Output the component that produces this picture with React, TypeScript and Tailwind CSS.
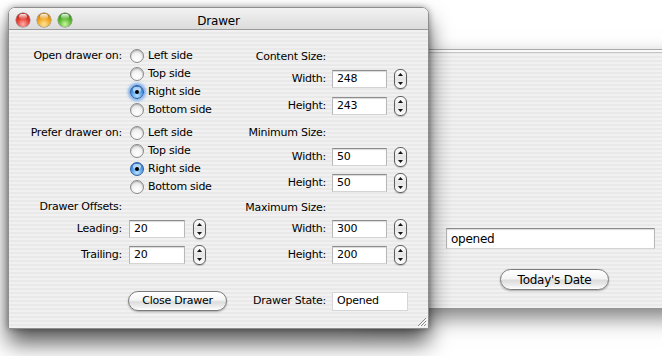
import React from "react";

const stripes =
  "bg-[repeating-linear-gradient(180deg,#f1f1f1_0px,#f1f1f1_2px,#e9e9e9_2px,#e9e9e9_4px)]";

function Radio({ checked, focus, label }: { checked?: boolean; focus?: boolean; label: string }) {
  return (
    <div className="flex h-[18px] items-center">
      {checked ? (
        <div
          className={
            "relative flex h-[14px] w-[14px] items-center justify-center rounded-full border border-[#2f5f9e] bg-[radial-gradient(circle_at_50%_80%,#b9e2ff_0%,#4a97e6_55%,#2a6cc0_100%)] " +
            (focus ? "shadow-[0_0_3px_2px_rgba(80,150,240,0.75)]" : "")
          }
        >
          <div className="absolute left-[2px] top-[1px] h-[5px] w-[8px] rounded-full bg-white/60" />
          <div className="relative h-[4px] w-[4px] rounded-full bg-black" />
        </div>
      ) : (
        <div className="relative h-[14px] w-[14px] rounded-full border border-[#8a8a8a] bg-[radial-gradient(circle_at_50%_75%,#ffffff_0%,#f4f4f4_45%,#cfcfcf_100%)] shadow-[inset_0_1px_1px_rgba(0,0,0,0.2)]" />
      )}
      <span className="ml-[4px]">{label}</span>
    </div>
  );
}

function Stepper() {
  return (
    <div className="flex h-[20px] w-[13px] flex-col items-center justify-between rounded-[6px] border border-[#5f5f5f] bg-[linear-gradient(180deg,#ffffff,#e4e4e4_50%,#ffffff)] py-[3px] shadow-[0_1px_1px_rgba(0,0,0,0.2)]">
      <svg width="5" height="3" viewBox="0 0 5 3">
        <path d="M2.5 0 L5 3 L0 3 Z" fill="#111" />
      </svg>
      <svg width="5" height="3" viewBox="0 0 5 3">
        <path d="M0 0 L5 0 L2.5 3 Z" fill="#111" />
      </svg>
    </div>
  );
}

function Field({ value, w }: { value: string; w: string }) {
  return (
    <div
      className={
        "flex h-[18px] items-center border border-t-[#8c8c8c] border-x-[#b8b8b8] border-b-[#d4d4d4] bg-white pl-[4px] shadow-[inset_0_1px_1px_rgba(0,0,0,0.15)] " +
        w
      }
    >
      {value}
    </div>
  );
}

function Light({ grad }: { grad: string }) {
  return (
    <div className={"relative h-[14px] w-[14px] rounded-full shadow-[0_0_0_0.5px_rgba(0,0,0,0.5)] " + grad}>
      <div className="absolute left-[3px] top-[1px] h-[5px] w-[8px] rounded-full bg-[linear-gradient(180deg,rgba(255,255,255,0.9),rgba(255,255,255,0.1))]" />
    </div>
  );
}

function AquaButton({ label, w }: { label: string; w: string }) {
  return (
    <div
      className={
        "flex h-[20px] shrink-0 items-center justify-center rounded-full border border-[#7a7a7a] bg-[linear-gradient(180deg,#ffffff_0%,#f4f4f4_45%,#dcdcdc_55%,#ececec_80%,#ffffff_100%)] shadow-[0_1px_2px_rgba(0,0,0,0.3)] " +
        w
      }
    >
      {label}
    </div>
  );
}

function RightRow({ label, value }: { label: string; value: string }) {
  return (
    <div className="flex h-[20px] items-center">
      <div className="w-[100px] shrink-0 text-right">{label}</div>
      <div className="ml-[6px]">
        <Field value={value} w="w-[55px]" />
      </div>
      <div className="ml-[7px]">
        <Stepper />
      </div>
    </div>
  );
}

function LeftFieldRow({ label, value }: { label: string; value: string }) {
  return (
    <div className="flex h-[20px] items-center">
      <div className="w-[113px] shrink-0 text-right">{label}</div>
      <div className="ml-[7px]">
        <Field value={value} w="w-[56px]" />
      </div>
      <div className="ml-[8px]">
        <Stepper />
      </div>
    </div>
  );
}

export default function App() {
  return (
    <div
      className="relative h-[356px] w-[662px] overflow-hidden bg-white text-[11px] tracking-[-0.25px] text-black"
      style={{ fontFamily: '"DejaVu Sans", "Liberation Sans", sans-serif' }}
    >
      {/* back window */}
      <div
        className={
          "absolute left-[360px] top-[49px] flex h-[259px] w-[340px] flex-col border-t border-[#a9a9a9] shadow-[0_10px_20px_rgba(0,0,0,0.5)] " +
          stripes
        }
      >
        <div className="h-[3px] border-b border-[#c4c4c4] bg-[#fafafa]" />
        <div className="ml-[86px] mt-[175px]">
          <div className="flex h-[21px] w-[209px] items-center border border-t-[#8c8c8c] border-x-[#b8b8b8] border-b-[#d4d4d4] bg-white pl-[4px] text-[12px] shadow-[inset_0_1px_1px_rgba(0,0,0,0.15)]">
            opened
          </div>
        </div>
        <div className="ml-[140px] mt-[20px]">
          <AquaButton label="Today's Date" w="w-[109px] h-[21px] text-[12px]" />
        </div>
      </div>

      {/* main window */}
      <div className="absolute left-[8px] top-[7px] flex h-[322px] w-[421px] flex-col overflow-hidden rounded-t-[7px] border border-[#8e8e8e] shadow-[0_14px_22px_rgba(0,0,0,0.65),0_0_6px_rgba(0,0,0,0.35)]">
        {/* title bar */}
        <div className="relative flex h-[22px] shrink-0 items-center border-b border-[#9a9a9a] bg-[linear-gradient(180deg,#f2f2f2,#dcdcdc)] px-[7px] pt-[2px]">
          <div className="flex gap-[7px]">
            <Light grad="bg-[radial-gradient(circle_at_50%_80%,#ffb0a8_0%,#e0372c_50%,#9e1c14_100%)]" />
            <Light grad="bg-[radial-gradient(circle_at_50%_80%,#ffe59a_0%,#f0a21c_50%,#a86410_100%)]" />
            <Light grad="bg-[radial-gradient(circle_at_50%_80%,#c8f7a0_0%,#52b22a_50%,#2c7214_100%)]" />
          </div>
          <div className="absolute inset-x-0 top-[4px] text-center text-[12px] tracking-[-0.2px]">Drawer</div>
        </div>

        {/* content */}
        <div className={"relative flex flex-1 " + stripes}>
          {/* left column */}
          <div className="flex w-[217px] shrink-0 flex-col pt-[17px]">
            <div className="flex">
              <div className="h-[18px] w-[113px] shrink-0 text-right leading-[18px]">Open drawer on:</div>
              <div className="ml-[8px] flex flex-col">
                <Radio label="Left side" />
                <Radio label="Top side" />
                <Radio label="Right side" checked focus />
                <Radio label="Bottom side" />
              </div>
            </div>
            <div className="mt-[5px] flex">
              <div className="h-[18px] w-[113px] shrink-0 text-right leading-[18px]">Prefer drawer on:</div>
              <div className="ml-[8px] flex flex-col">
                <Radio label="Left side" />
                <Radio label="Top side" />
                <Radio label="Right side" checked />
                <Radio label="Bottom side" />
              </div>
            </div>
            <div className="mt-[2px] h-[18px] w-[113px] text-right leading-[18px]">Drawer Offsets:</div>
            <div className="mt-[3px]">
              <LeftFieldRow label="Leading:" value="20" />
            </div>
            <div className="mt-[6px]">
              <LeftFieldRow label="Trailing:" value="20" />
            </div>
            <div className="mt-[26px] flex h-[20px] items-center">
              <div className="w-[119px] shrink-0" />
              <AquaButton label="Close Drawer" w="w-[99px]" />
            </div>
          </div>

          {/* right column */}
          <div className="flex flex-col pt-[18px]">
            <div className="h-[18px] w-[100px] text-right leading-[18px]">Content Size:</div>
            <div className="mt-[3px]">
              <RightRow label="Width:" value="248" />
            </div>
            <div className="mt-[7px]">
              <RightRow label="Height:" value="243" />
            </div>
            <div className="mt-[8px] h-[18px] w-[100px] text-right leading-[18px]">Minimum Size:</div>
            <div className="mt-[5px]">
              <RightRow label="Width:" value="50" />
            </div>
            <div className="mt-[6px]">
              <RightRow label="Height:" value="50" />
            </div>
            <div className="mt-[6px] h-[18px] w-[100px] text-right leading-[18px]">Maximum Size:</div>
            <div className="mt-[2px]">
              <RightRow label="Width:" value="300" />
            </div>
            <div className="mt-[6px]">
              <RightRow label="Height:" value="200" />
            </div>
            <div className="mt-[26px] flex h-[20px] items-center">
              <div className="w-[100px] shrink-0 text-right">Drawer State:</div>
              <div className="ml-[6px] flex h-[19px] w-[76px] items-center border border-[#d6d6d6] bg-white pl-[4px]">
                Opened
              </div>
            </div>
          </div>

          {/* resize grip */}
          <svg className="absolute bottom-[1px] right-[1px]" width="11" height="11" viewBox="0 0 11 11">
            <path d="M10 2 L2 10 M10 5 L5 10 M10 8 L8 10" stroke="#8a8a8a" strokeWidth="1" />
            <path d="M11 3 L3 11 M11 6 L6 11 M11 9 L9 11" stroke="#ffffff" strokeWidth="1" />
          </svg>
        </div>
      </div>
    </div>
  );
}
